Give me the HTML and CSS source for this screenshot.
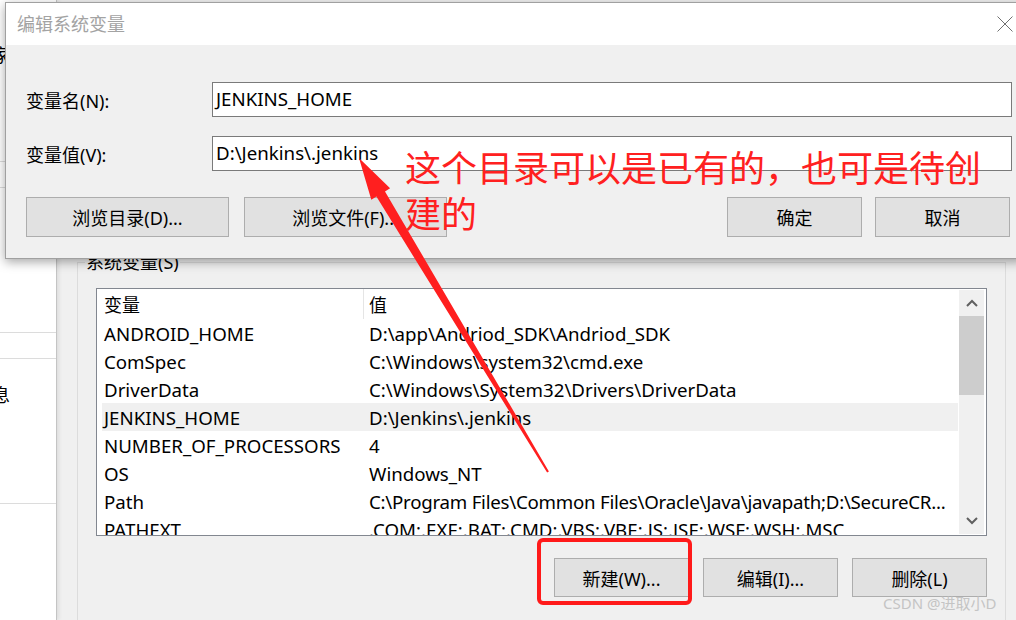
FILE: index.html
```html
<!DOCTYPE html>
<html lang="zh-CN">
<head>
    <meta charset="UTF-8">
    <title>编辑系统变量</title>
    <link rel="stylesheet" href="styles.css">
</head>
<body>
    <!-- window behind the dialog -->
    <div class="desk">
        <aside class="side">
            <div class="side-item s1"><span class="side-text">家</span></div>
            <div class="side-item s2"></div>
            <div class="side-item s3"></div>
            <div class="side-item s4"></div>
            <div class="side-item s5"><span class="side-text">息</span></div>
            <div class="side-item s6"></div>
        </aside>
        <main class="main">
            <section class="group">
                <span class="group-title">系统变量(S)</span>
                <div class="list">
                    <div class="list-body">
                        <div class="row head"><span class="c1">变量</span><span class="c2">值</span></div>
                        <div class="row"><span class="c1">ANDROID_HOME</span><span class="c2">D:\app\Andriod_SDK\Andriod_SDK</span></div>
                        <div class="row"><span class="c1">ComSpec</span><span class="c2">C:\Windows\system32\cmd.exe</span></div>
                        <div class="row"><span class="c1">DriverData</span><span class="c2">C:\Windows\System32\Drivers\DriverData</span></div>
                        <div class="row selected"><span class="c1">JENKINS_HOME</span><span class="c2">D:\Jenkins\.jenkins</span></div>
                        <div class="row"><span class="c1">NUMBER_OF_PROCESSORS</span><span class="c2">4</span></div>
                        <div class="row"><span class="c1">OS</span><span class="c2">Windows_NT</span></div>
                        <div class="row"><span class="c1">Path</span><span class="c2 long">C:\Program Files\Common Files\Oracle\Java\javapath;D:\SecureCR...</span></div>
                        <div class="row"><span class="c1">PATHEXT</span><span class="c2">.COM;.EXE;.BAT;.CMD;.VBS;.VBE;.JS;.JSE;.WSF;.WSH;.MSC</span></div>
                    </div>
                    <div class="scrollbar">
                        <span class="sb-btn">
                            <svg width="12" height="8" viewBox="0 0 12 8"><path d="M1 7 L6 2 L11 7" fill="none" stroke="#606060" stroke-width="2"/></svg>
                        </span>
                        <span class="sb-thumb"></span>
                        <span class="sb-track"></span>
                        <span class="sb-btn">
                            <svg width="12" height="8" viewBox="0 0 12 8"><path d="M1 1 L6 6 L11 1" fill="none" stroke="#606060" stroke-width="2"/></svg>
                        </span>
                    </div>
                </div>
                <div class="actions">
                    <button class="btn">新建(W)...</button>
                    <button class="btn">编辑(I)...</button>
                    <button class="btn">删除(L)</button>
                </div>
            </section>
        </main>
    </div>

    <!-- edit dialog -->
    <div class="dialog">
        <div class="titlebar">
            <span class="title">编辑系统变量</span>
            <svg class="close" width="16" height="16" viewBox="0 0 16 16"><path d="M0.5 0.5 L15.5 15.5 M15.5 0.5 L0.5 15.5" stroke="#707070" stroke-width="1"/></svg>
        </div>
        <div class="dlg-body">
            <div class="fields">
                <label class="field-label">变量名(N):</label>
                <div class="input">JENKINS_HOME</div>
                <label class="field-label">变量值(V):</label>
                <div class="input">D:\Jenkins\.jenkins</div>
            </div>
            <div class="dlg-actions">
                <div class="btn-group">
                    <button class="btn wide">浏览目录(D)...</button>
                    <button class="btn wide">浏览文件(F)...</button>
                </div>
                <div class="btn-group right">
                    <button class="btn">确定</button>
                    <button class="btn">取消</button>
                </div>
            </div>
        </div>
    </div>

    <!-- annotations -->
    <div class="note">这个目录可以是已有的，也可是待创<br>建的</div>
    <svg class="arrow" width="1016" height="620" viewBox="0 0 1016 620">
        <polygon points="359,158 390.1,188.3 385,191.4 548.9,471.5 547.1,472.5 376.4,196.6 371.3,199.7" fill="#ff1f1f"/>
    </svg>
    <div class="mark-box"></div>
    <div class="watermark">CSDN @进取小D</div>
</body>
</html>
```

FILE: styles.css
```css
body {
    margin: 0;
    width: 1016px;
    height: 620px;
    overflow: hidden;
    position: relative;
    background: #f0f0f0;
    font-family: "Noto Sans", "Noto Sans CJK SC", sans-serif;
    font-size: 18px;
    color: #000;
}

.desk {
    display: flex;
    height: 620px;
    overflow: hidden;
}

.side {
    width: 56px;
    flex-shrink: 0;
    background: #fff;
    border-right: 1px solid #c4c4c4;
    box-shadow: 2px 0 4px rgba(0, 0, 0, 0.08);
    overflow: hidden;
}

.side-item {
    border-bottom: 1px solid #dcdcdc;
    box-sizing: border-box;
    position: relative;
}

.s1 { height: 162px; }
.s2 { height: 26px; }
.s3 { height: 145px; }
.s4 { height: 26px; }
.s5 { height: 145px; }
.s6 { height: 116px; border-bottom: none; }

.side-text {
    display: block;
    margin-left: -8px;
    line-height: 20px;
}

.s1 .side-text { padding-top: 45px; }
.s5 .side-text { padding-top: 26px; }

.main {
    flex: 1;
    min-width: 0;
    padding-left: 20px;
}

.group {
    margin-top: 262px;
    margin-right: 10px;
    border: 1px solid #dcdcdc;
    border-bottom: none;
    padding: 25px 18px 0;
    height: 358px;
    box-sizing: border-box;
    position: relative;
}

.group-title {
    position: absolute;
    left: 7px;
    top: -12px;
    background: #f0f0f0;
    padding: 0 1px;
    line-height: 22px;
}

.list {
    height: 248px;
    box-sizing: border-box;
    border: 1px solid #828790;
    background: #fff;
    display: flex;
}

.list-body {
    flex: 1;
    min-width: 0;
    padding-left: 5px;
    overflow: hidden;
}

.row {
    display: flex;
    height: 28px;
    align-items: center;
    white-space: nowrap;
    font-size: 18.7px;
}

.row.head {
    height: 30px;
    font-size: 18px;
}

.row.selected {
    background: #f0f0f0;
}

.c1 {
    width: 262px;
    padding-left: 2px;
    box-sizing: border-box;
    border-right: 1px solid transparent;
    flex-shrink: 0;
}

.head .c1 {
    border-right-color: #e5e5e5;
    align-self: stretch;
    display: flex;
    align-items: center;
}

.c2 {
    padding-left: 5px;
}

.c2.long {
    letter-spacing: -0.25px;
}

.scrollbar {
    width: 25px;
    flex-shrink: 0;
    margin: 1px 2px 1px 1px;
    background: #f0f0f0;
    display: flex;
    flex-direction: column;
}

.sb-btn {
    height: 26px;
    display: flex;
    align-items: center;
    justify-content: center;
}

.sb-thumb {
    height: 79px;
    background: #cdcdcd;
}

.sb-track {
    flex: 1;
}

.actions {
    display: flex;
    justify-content: flex-end;
    gap: 14px;
    margin-top: 22px;
}

.btn {
    width: 135px;
    height: 39px;
    background: #e1e1e1;
    border: 1px solid #adadad;
    font-family: "Noto Sans", "Noto Sans CJK SC", sans-serif;
    font-size: 18px;
    color: #000;
    padding: 0;
}

/* dialog */
.dialog {
    position: absolute;
    left: 5px;
    top: 2px;
    width: 1017px;
    border: 1px solid #a0a0a0;
    box-shadow: 0 3px 10px rgba(0, 0, 0, 0.35);
    background: #f0f0f0;
}

.titlebar {
    height: 42px;
    background: #fff;
    display: flex;
    align-items: center;
    justify-content: space-between;
    padding: 0 10px 0 11px;
}

.title {
    color: #a3a3a3;
    margin-top: -3px;
}

.dlg-body {
    padding: 37px 11px 21px 20px;
}

.fields {
    display: grid;
    grid-template-columns: 186px 1fr;
    row-gap: 19px;
    align-items: center;
}

.input {
    height: 35px;
    box-sizing: border-box;
    border: 1px solid #7a7a7a;
    background: #fff;
    padding-left: 3px;
    line-height: 31px;
    font-size: 18.7px;
}

.dlg-actions {
    display: flex;
    justify-content: space-between;
    margin-top: 26px;
}

.btn-group {
    display: flex;
    gap: 15px;
}

.btn-group.right {
    gap: 13px;
    margin-right: 2px;
}

.dlg-actions .btn {
    height: 40px;
}

.btn.wide {
    width: 203px;
}

/* annotations */
.note {
    position: absolute;
    left: 405px;
    top: 143px;
    font-family: "Noto Sans CJK SC", sans-serif;
    font-size: 36px;
    line-height: 46px;
    color: #ff2020;
    white-space: nowrap;
}

.arrow {
    position: absolute;
    left: 0;
    top: 0;
    pointer-events: none;
}

.mark-box {
    position: absolute;
    left: 537px;
    top: 538px;
    width: 155px;
    height: 67px;
    box-sizing: border-box;
    border: 4px solid #ff1a1a;
    border-radius: 6px;
}

.watermark {
    position: absolute;
    left: 883px;
    top: 592px;
    font-size: 15px;
    color: #c4c4c4;
    white-space: nowrap;
}
```
